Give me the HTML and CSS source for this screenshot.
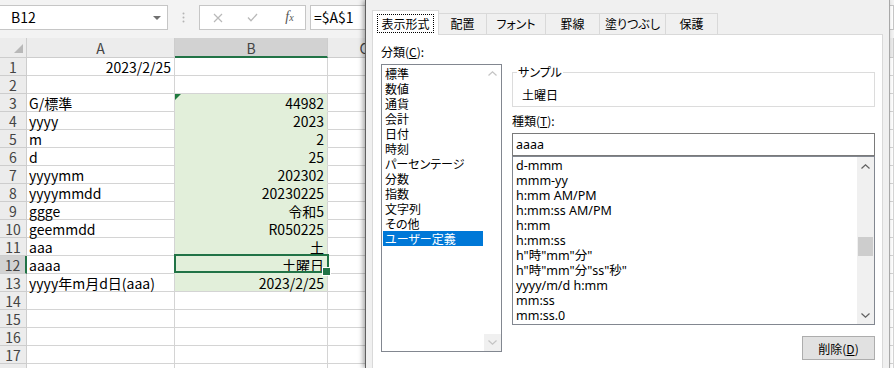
FILE: index.html
```html
<!DOCTYPE html>
<html lang="ja">
  <head>
    <meta charset="UTF-8" />
    <title>セルの書式設定</title>
    <link rel="stylesheet" href="styles.css">
  </head>
  <body>
    <div class="excel">
      <div class="formula-bar">
        <div class="name-box"><span>B12</span><span class="drop"></span></div>
        <div class="grip">
          <svg width="3" height="11" viewBox="0 0 3 11"><circle cx="1.5" cy="1.5" r="1" fill="#b4b4b4"/><circle cx="1.5" cy="5.5" r="1" fill="#b4b4b4"/><circle cx="1.5" cy="9.5" r="1" fill="#b4b4b4"/></svg>
        </div>
        <div class="fx-box">
          <span class="fx-btn">
            <svg width="10" height="10" viewBox="0 0 10 10"><path d="M1 1L9 9M9 1L1 9" stroke="#b9b9b9" stroke-width="1.2" fill="none"/></svg>
          </span>
          <span class="fx-btn">
            <svg width="11" height="9" viewBox="0 0 11 9"><path d="M1 4.5L4 7.8L10 1" stroke="#b9b9b9" stroke-width="1.3" fill="none"/></svg>
          </span>
          <span class="fx-btn fx"><i>f<small>x</small></i></span>
        </div>
        <div class="formula">=$A$1</div>
      </div>

      <div class="sheet">
        <div class="hd corner"><span class="tri"></span></div>
        <div class="hd">A</div>
        <div class="hd col-on">B</div>
        <div class="hd col-c"><span>C</span></div>

        <div class="hd">1</div><div class="c r">2023/2/25</div><div class="c"></div><div class="c"></div>
        <div class="hd">2</div><div class="c"></div><div class="c"></div><div class="c"></div>
        <div class="hd">3</div><div class="c">G/標準</div><div class="c r g flag">44982</div><div class="c"></div>
        <div class="hd">4</div><div class="c">yyyy</div><div class="c r g">2023</div><div class="c"></div>
        <div class="hd">5</div><div class="c">m</div><div class="c r g">2</div><div class="c"></div>
        <div class="hd">6</div><div class="c">d</div><div class="c r g">25</div><div class="c"></div>
        <div class="hd">7</div><div class="c">yyyymm</div><div class="c r g">202302</div><div class="c"></div>
        <div class="hd">8</div><div class="c">yyyymmdd</div><div class="c r g">20230225</div><div class="c"></div>
        <div class="hd">9</div><div class="c">ggge</div><div class="c r g">令和5</div><div class="c"></div>
        <div class="hd">10</div><div class="c">geemmdd</div><div class="c r g">R050225</div><div class="c"></div>
        <div class="hd">11</div><div class="c">aaa</div><div class="c r g">土</div><div class="c"></div>
        <div class="hd row-on">12</div><div class="c">aaaa</div><div class="c r g cur">土曜日</div><div class="c"></div>
        <div class="hd">13</div><div class="c">yyyy年m月d日(aaa)</div><div class="c r g end">2023/2/25</div><div class="c"></div>
        <div class="hd">14</div><div class="c"></div><div class="c"></div><div class="c"></div>
        <div class="hd">15</div><div class="c"></div><div class="c"></div><div class="c"></div>
        <div class="hd">16</div><div class="c"></div><div class="c"></div><div class="c"></div>
        <div class="hd">17</div><div class="c"></div><div class="c"></div><div class="c"></div>
        <div class="hd last"></div><div class="c last"></div><div class="c last"></div><div class="c last"></div>
      </div>
    </div>

    <div class="dialog">
      <div class="tabs">
        <div class="tab active"><span>表示形式</span></div>
        <div class="tab">配置</div>
        <div class="tab">フォント</div>
        <div class="tab">罫線</div>
        <div class="tab">塗りつぶし</div>
        <div class="tab">保護</div>
      </div>

      <div class="panel">
        <div class="col-left">
          <div class="label">分類(<u>C</u>):</div>
          <div class="listbox cat">
            <ul class="items">
              <li>標準</li>
              <li>数値</li>
              <li>通貨</li>
              <li>会計</li>
              <li>日付</li>
              <li>時刻</li>
              <li>パーセンテージ</li>
              <li>分数</li>
              <li>指数</li>
              <li>文字列</li>
              <li>その他</li>
              <li class="sel">ユーザー定義</li>
            </ul>
            <div class="vscroll off">
              <span class="arrow up"><svg width="9" height="5" viewBox="0 0 9 5"><path d="M0.5 4.5L4.5 0.8L8.5 4.5" stroke="#c4c4c4" stroke-width="1.2" fill="none"/></svg></span>
              <span class="track"></span>
              <span class="arrow down"><svg width="9" height="5" viewBox="0 0 9 5"><path d="M0.5 0.5L4.5 4.2L8.5 0.5" stroke="#c4c4c4" stroke-width="1.2" fill="none"/></svg></span>
            </div>
          </div>
        </div>

        <div class="col-right">
          <fieldset class="sample">
            <legend>サンプル</legend>
            <div class="value">土曜日</div>
          </fieldset>
          <div class="label kind">種類(<u>T</u>):</div>
          <div class="textbox">aaaa</div>
          <div class="listbox types">
            <ul class="items">
              <li>d-mmm</li>
              <li>mmm-yy</li>
              <li>h:mm AM/PM</li>
              <li>h:mm:ss AM/PM</li>
              <li>h:mm</li>
              <li>h:mm:ss</li>
              <li>h"時"mm"分"</li>
              <li>h"時"mm"分"ss"秒"</li>
              <li>yyyy/m/d h:mm</li>
              <li>mm:ss</li>
              <li>mm:ss.0</li>
            </ul>
            <div class="vscroll">
              <span class="arrow up"><svg width="9" height="5" viewBox="0 0 9 5"><path d="M0.5 4.5L4.5 0.8L8.5 4.5" stroke="#606060" stroke-width="1.2" fill="none"/></svg></span>
              <span class="track"><span class="thumb"></span></span>
              <span class="arrow down"><svg width="9" height="5" viewBox="0 0 9 5"><path d="M0.5 0.5L4.5 4.2L8.5 0.5" stroke="#606060" stroke-width="1.2" fill="none"/></svg></span>
            </div>
          </div>
          <button class="btn">削除(<u>D</u>)</button>
        </div>
      </div>
    </div>
  </body>
</html>
```

FILE: styles.css
```css
* {
  box-sizing: border-box;
}
body {
  margin: 0;
  width: 894px;
  height: 368px;
  overflow: hidden;
  position: relative;
  background: #fff;
  color: #000;
  font-family: "Noto Sans CJK JP", sans-serif;
}

/* --- Excel 側 --- */
.excel {
  height: 100%;
  display: flex;
  flex-direction: column;
  overflow: hidden;
}
.formula-bar {
  flex: none;
  height: 38px;
  background: #f3f3f3;
  display: flex;
  align-items: flex-start;
  padding-top: 5px;
  font-size: 14px;
}
.name-box {
  width: 169px;
  height: 25px;
  margin-left: -1px;
  background: #fff;
  border: 1px solid #c6c6c6;
  display: flex;
  align-items: center;
  justify-content: space-between;
  padding: 0 6px 0 11px;
  line-height: 23px;
}
.drop {
  width: 0;
  height: 0;
  border-left: 4px solid transparent;
  border-right: 4px solid transparent;
  border-top: 4px solid #707070;
}
.grip {
  width: 31px;
  height: 25px;
  display: flex;
  align-items: center;
  justify-content: center;
}
.fx-box {
  width: 107px;
  height: 25px;
  background: #fff;
  border: 1px solid #c6c6c6;
  display: flex;
}
.fx-btn {
  width: 35px;
  display: flex;
  align-items: center;
  justify-content: center;
}
.fx {
  padding-left: 4px;
  font-family: "Liberation Serif", serif;
  font-size: 14px;
  line-height: 16px;
  color: #555;
}
.fx small {
  font-size: 10px;
}
.formula {
  flex: 1;
  height: 25px;
  margin-left: 4px;
  background: #fff;
  border: 1px solid #c6c6c6;
  padding-left: 3px;
  line-height: 22px;
}

.sheet {
  flex: 1;
  display: grid;
  grid-template-columns: 27px 148px 153px 1fr;
  grid-template-rows: 20px repeat(17, 18px) 4px;
  font-size: 14px;
  line-height: 15px;
}
.sheet > div {
  border-right: 1px solid #d4d4d4;
  border-bottom: 1px solid #d4d4d4;
  padding: 2px 3px 0 2px;
  white-space: nowrap;
}
.sheet > .last {
  border-bottom: none;
  padding: 0;
}
.sheet > .hd {
  background: #ececec;
  border-color: #cdcdcd;
  color: #444;
  text-align: center;
  padding: 2px 0 0;
}
.sheet > .hd:nth-child(-n + 4) {
  padding-top: 3px;
}
.sheet > .corner {
  display: flex;
  justify-content: flex-end;
  align-items: flex-end;
  padding: 0 3px 4px 0;
}
.tri {
  width: 0;
  height: 0;
  border-left: 9px solid transparent;
  border-bottom: 9px solid #b8b8b8;
}
.sheet > .col-on {
  background: #d2d2d2;
  border-bottom: 2px solid #217346;
}
.sheet > .row-on {
  background: #d2d2d2;
  border-right: 2px solid #217346;
}
.sheet > .col-c {
  text-align: left;
}
.col-c span {
  display: block;
  width: 72px;
  text-align: center;
}
.r {
  text-align: right;
}
.sheet > .g {
  background: #e2efda;
  border-bottom-color: #e2efda;
}
.sheet > .g.end {
  border-bottom-color: #d4d4d4;
}
.flag {
  position: relative;
}
.flag::before {
  content: "";
  position: absolute;
  left: 0;
  top: 0;
  border-top: 6px solid #1f7a3e;
  border-right: 6px solid transparent;
}
.sheet > .cur {
  position: relative;
}
.cur::before {
  content: "";
  position: absolute;
  left: -1px;
  top: -2px;
  right: -2px;
  bottom: 0;
  border: 2px solid #217346;
}
.cur::after {
  content: "";
  position: absolute;
  right: -4px;
  bottom: -3px;
  width: 7px;
  height: 7px;
  background: #217346;
  border: 1px solid #fff;
}

/* --- セルの書式設定ダイアログ --- */
.dialog {
  position: absolute;
  left: 365px;
  top: 0;
  width: 525px;
  height: 368px;
  overflow: hidden;
  background: #f0f0f0;
  border-left: 1px solid #5f5f5f;
  border-right: 1px solid #a8a8a8;
  box-shadow: -2px 0 5px rgba(0, 0, 0, 0.35);
  padding: 10px 6px 0 6px;
  font-size: 12px;
  line-height: 15px;
  font-feature-settings: "palt";
}
.tabs {
  position: relative;
  z-index: 1;
  display: grid;
  grid-template-columns: 67px 48px 59px 54px 66px 52px;
  align-items: end;
  height: 25px;
  margin-bottom: -1px;
}
.tab {
  height: 21px;
  margin-bottom: 1px;
  background: #f0f0f0;
  border: 1px solid #d9d9d9;
  border-left: none;
  border-bottom: none;
  text-align: center;
  line-height: 20px;
}
.tab.active {
  height: 25px;
  margin-bottom: 0;
  background: #fff;
  border-left: 1px solid #d9d9d9;
  display: flex;
  justify-content: center;
  padding-top: 3px;
}
.tab.active span {
  width: 57px;
  height: 19px;
  border: 1px dotted #000;
  line-height: 17px;
}
.panel {
  height: 334px;
  background: #fff;
  border: 1px solid #d9d9d9;
  border-bottom: none;
  display: flex;
  gap: 10px;
  padding-left: 8px;
}
.label {
  line-height: 16px;
}
.col-left {
  width: 121px;
  padding-top: 9px;
}
.col-right {
  width: 363px;
  padding-top: 29px;
  display: flex;
  flex-direction: column;
}

.listbox {
  border: 1px solid #828790;
  background: #fff;
  display: flex;
}
.items {
  flex: 1;
  list-style: none;
  margin: 0;
  padding: 1px 0 0;
}
.items li {
  white-space: nowrap;
}
.cat {
  margin-top: 4px;
  height: 288px;
}
.cat li {
  margin: 0 1px;
  padding-left: 2px;
}
.cat li.sel {
  background: #0078d7;
  color: #fff;
}
.vscroll {
  width: 17px;
  flex: none;
  display: flex;
  flex-direction: column;
  background: #f0f0f0;
}
.arrow {
  height: 17px;
  display: flex;
  align-items: center;
  justify-content: center;
}
.track {
  flex: 1;
}
.vscroll.off {
  background: #fff;
}
.vscroll.off .down {
  background: #f0f0f0;
}
.types .arrow.up {
  height: 19px;
}
.thumb {
  display: block;
  height: 19px;
  margin: 61px 1px 0;
  background: #cdcdcd;
}

.sample {
  margin: 0;
  min-width: 0;
  padding: 7px 9px 3px;
  border: 1px solid #dcdcdc;
}
.sample legend {
  padding: 0 1px;
  margin-left: -5px;
  line-height: 16px;
}
.sample .value {
  line-height: 16px;
}
.kind {
  margin-top: 6px;
}
.textbox {
  margin-top: 4px;
  height: 23px;
  border: 1px solid #7a7a7a;
  padding-left: 3px;
  font-family: "Noto Sans", "Noto Sans CJK JP", sans-serif;
  font-size: 12.5px;
  line-height: 21px;
}
.types {
  height: 169px;
}
.types .items {
  padding-left: 3px;
  font-family: "Noto Sans", "Noto Sans CJK JP", sans-serif;
  font-size: 12.5px;
  font-feature-settings: normal;
}
.btn {
  align-self: flex-end;
  margin-top: 11px;
  width: 73px;
  height: 24px;
  padding: 0;
  background: #e1e1e1;
  border: 1px solid #adadad;
  font: inherit;
  color: #000;
}
```
